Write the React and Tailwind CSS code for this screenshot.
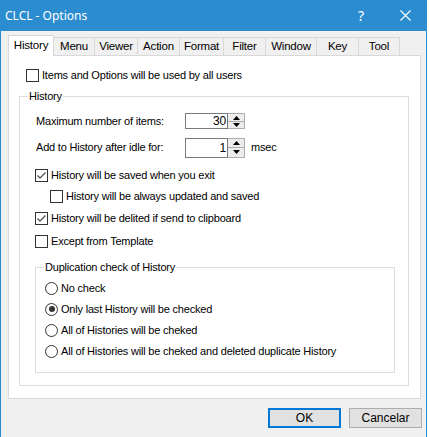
import React from 'react';

const tabs = [
  { name: 'History', w: 'w-[46px]' },
  { name: 'Menu', w: 'w-[41px]' },
  { name: 'Viewer', w: 'w-[43px]' },
  { name: 'Action', w: 'w-[42px]' },
  { name: 'Format', w: 'w-[44px]' },
  { name: 'Filter', w: 'w-[42px]' },
  { name: 'Window', w: 'w-[51px]' },
  { name: 'Key', w: 'w-[42px]' },
  { name: 'Tool', w: 'w-[41px]' },
];

function CheckBox({ checked, label, className = '' }) {
  return (
    <div className={`flex items-center h-[13px] ${className}`}>
      <div className="w-[13px] h-[13px] border border-[#333333] bg-white flex items-center justify-center shrink-0">
        {checked && (
          <svg width="11" height="11" viewBox="0 0 11 11">
            <polyline points="1.5,5.5 4,8 9.5,2.5" fill="none" stroke="#555555" strokeWidth="1.3" />
          </svg>
        )}
      </div>
      <span className="ml-[3px] leading-[13px] whitespace-nowrap">{label}</span>
    </div>
  );
}

function Radio({ checked, label, className = '' }) {
  return (
    <div className={`flex items-center h-[13px] ${className}`}>
      <div className="w-[13px] h-[13px] rounded-full border border-[#333333] bg-white flex items-center justify-center shrink-0">
        {checked && <div className="w-[6px] h-[6px] rounded-full bg-[#333333]" />}
      </div>
      <span className="ml-[3px] leading-[13px] whitespace-nowrap">{label}</span>
    </div>
  );
}

function Spinner({ value, tall }) {
  return (
    <div className={`flex ${tall ? 'h-[20px]' : 'h-[16px]'}`}>
      <div className="w-[43px] border border-[#7a7a7a] bg-white flex items-center justify-end pr-[1px] leading-none text-[12px]">
        {value}
      </div>
      <div className="w-[17px] flex flex-col border-y border-r border-[#adadad]">
        <div className="flex-1 bg-[#ececec] border-b border-[#adadad] flex items-center justify-center">
          <svg width="7" height="4" viewBox="0 0 7 4"><polygon points="0,4 7,4 3.5,0" fill="#000" /></svg>
        </div>
        <div className="flex-1 bg-[#ececec] flex items-center justify-center">
          <svg width="7" height="4" viewBox="0 0 7 4"><polygon points="0,0 7,0 3.5,4" fill="#000" /></svg>
        </div>
      </div>
    </div>
  );
}

export default function App() {
  return (
    <div className="w-[430px] h-[437px] bg-white overflow-hidden text-[11px] tracking-[-0.2px] text-black font-['Liberation_Sans',Arial,sans-serif]">
      <div className="w-[427px] h-[437px] flex flex-col border-x border-[#2b8cd0] bg-[#f0f0f0]">
        {/* Title bar */}
        <div className="h-[31px] bg-[#2b8cd0] flex items-center text-white shrink-0 -mx-px">
          <span className="ml-[5px] text-[12px] tracking-normal font-['Noto_Sans',sans-serif]">CLCL - Options</span>
          <span className="ml-auto text-[14px] font-['Noto_Sans',sans-serif] mr-[36px]">?</span>
          <svg className="mr-[16px]" width="11" height="11" viewBox="0 0 11 11">
            <path d="M0.5 0.5 L10.5 10.5 M10.5 0.5 L0.5 10.5" stroke="#ffffff" strokeWidth="1.1" />
          </svg>
        </div>

        {/* Tabs */}
        <div className="flex items-end h-[20px] mt-[4px] ml-[7px] text-[11.5px]">
          {tabs.map((t, i) =>
            i === 0 ? (
              <div
                key={t.name}
                className={`${t.w} h-[21px] -mb-px relative z-10 bg-white border-l border-t border-r border-[#d9d9d9] flex items-center justify-center pb-[1px]`}
              >
                {t.name}
              </div>
            ) : (
              <div
                key={t.name}
                className={`${t.w} h-[18px] bg-[#f0f0f0] border-t border-r border-[#d9d9d9] flex items-center justify-center`}
              >
                {t.name}
              </div>
            )
          )}
        </div>

        {/* Panel */}
        <div className="ml-[7px] w-[413px] h-[344px] bg-white border border-[#d9d9d9] flex flex-col">
          <CheckBox label="Items and Options will be used by all users" className="mt-[13px] ml-[17px]" />

          {/* History group */}
          <div className="relative mt-[14px] ml-[10px] w-[390px] h-[290px] border border-[#dcdcdc] flex flex-col pl-[15px]">
            <span className="absolute left-[8px] -top-[7px] px-[1px] bg-white leading-[13px]">History</span>

            <div className="flex items-center mt-[16px]">
              <span className="w-[150px] pl-[1px]">Maximum number of items:</span>
              <Spinner value="30" />
            </div>
            <div className="flex items-center mt-[8px]">
              <span className="w-[150px] pl-[1px]">Add to History after idle for:</span>
              <Spinner value="1" tall />
              <span className="ml-[6px]">msec</span>
            </div>

            <CheckBox checked label="History will be saved when you exit" className="mt-[11px]" />
            <CheckBox label="History will be always updated and saved" className="mt-[8px] ml-[15px]" />
            <CheckBox checked label="History will be delited if send to clipboard" className="mt-[9px]" />
            <CheckBox label="Except from Template" className="mt-[10px]" />

            {/* Duplication group */}
            <div className="relative mt-[19px] w-[360px] h-[106px] border border-[#dcdcdc] flex flex-col pl-[9px]">
              <span className="absolute left-[8px] -top-[7px] px-[1px] bg-white leading-[13px]">Duplication check of History</span>
              <Radio label="No check" className="mt-[14px]" />
              <Radio checked label="Only last History will be checked" className="mt-[8px]" />
              <Radio label="All of Histories will be cheked" className="mt-[8px]" />
              <Radio label="All of Histories will be cheked and deleted duplicate History" className="mt-[8px]" />
            </div>
          </div>
        </div>

        {/* Buttons */}
        <div className="flex justify-end gap-[8px] mt-[9px] mr-[4px]">
          <button className="w-[73px] h-[20px] bg-[#e1e1e1] border border-[#0078d7] shadow-[inset_0_0_0_1px_#0078d7] text-[12px] tracking-normal leading-none">
            OK
          </button>
          <button className="w-[73px] h-[20px] bg-[#e1e1e1] border border-[#adadad] text-[12px] tracking-normal leading-none">
            Cancelar
          </button>
        </div>
      </div>
    </div>
  );
}
